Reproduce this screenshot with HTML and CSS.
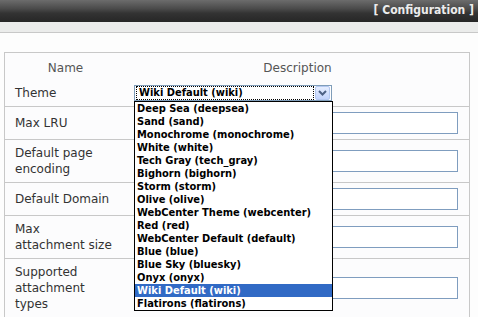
FILE: index.html
```html
<!doctype html>
<html>
  <head>
    <meta charset="UTF-8" />
    <title>Configuration</title>
    <link rel="stylesheet" href="styles.css">
  </head>
  <body>
    <div class="topbar">[ Configuration ]</div>
    <div class="subbar"></div>

    <div class="content">
      <table class="config">
        <thead>
          <tr class="head">
            <th class="col-name">Name</th>
            <th>Description</th>
          </tr>
        </thead>
        <tbody>
          <tr class="theme-row">
            <td class="label">Theme</td>
            <td class="value">
              <div class="combo">
                <div class="combo-box">
                  <span class="combo-text">Wiki Default (wiki)</span>
                  <span class="combo-btn">
                    <svg width="9" height="6" viewBox="0 0 9 6">
                      <path d="M1 1 L4.5 4.5 L8 1" fill="none" stroke="#4d6185" stroke-width="2" />
                    </svg>
                  </span>
                </div>
                <ul class="combo-list">
                  <li>Deep Sea (deepsea)</li>
                  <li>Sand (sand)</li>
                  <li>Monochrome (monochrome)</li>
                  <li>White (white)</li>
                  <li>Tech Gray (tech_gray)</li>
                  <li>Bighorn (bighorn)</li>
                  <li>Storm (storm)</li>
                  <li>Olive (olive)</li>
                  <li>WebCenter Theme (webcenter)</li>
                  <li>Red (red)</li>
                  <li>WebCenter Default (default)</li>
                  <li>Blue (blue)</li>
                  <li>Blue Sky (bluesky)</li>
                  <li>Onyx (onyx)</li>
                  <li class="selected">Wiki Default (wiki)</li>
                  <li>Flatirons (flatirons)</li>
                </ul>
              </div>
            </td>
          </tr>
          <tr>
            <td class="label">Max LRU</td>
            <td class="value"><input class="field" type="text"></td>
          </tr>
          <tr>
            <td class="label">Default page encoding</td>
            <td class="value"><input class="field" type="text"></td>
          </tr>
          <tr>
            <td class="label">Default Domain</td>
            <td class="value"><input class="field" type="text"></td>
          </tr>
          <tr>
            <td class="label">Max<br>attachment size</td>
            <td class="value"><input class="field" type="text"></td>
          </tr>
          <tr>
            <td class="label">Supported attachment types</td>
            <td class="value"><input class="field" type="text"></td>
          </tr>
        </tbody>
      </table>
    </div>
  </body>
</html>
```

FILE: styles.css
```css
html,
body {
  margin: 0;
  background-color: #fdfdfd;
  font-family: "DejaVu Sans", Verdana, sans-serif;
  font-size: 12px;
  color: #333;
  overflow: hidden;
}
.topbar {
  height: 22px;
  line-height: 21px;
  padding-right: 4px;
  text-align: right;
  font-family: "DejaVu Sans Condensed", "DejaVu Sans", sans-serif;
  font-size: 12px;
  font-weight: bold;
  color: #ececec;
  background: linear-gradient(#6c6c6c 0%, #4a4a4a 40%, #333 60%, #262626 100%);
}
.subbar {
  height: 10px;
  background-color: #ebeceb;
  border-bottom: 1px solid #c8c8c8;
}
.content {
  padding: 19px 8px 0 4px;
}
.config {
  width: 100%;
  border-collapse: collapse;
  border: 1px solid #c8c8c8;
  background-color: #fcfcfd;
}
.config th {
  font-weight: normal;
  color: #555;
  padding: 8px 0 7px;
  text-align: center;
}
.config .col-name {
  width: 121px;
}
.config td {
  border-top: 1px solid #c8c8c8;
  vertical-align: middle;
  line-height: 16px;
  padding: 5px 11px 5px 10px;
}
.config .theme-row td {
  border-top: none;
  padding-top: 3px;
  padding-bottom: 5px;
}
.config .value {
  padding-left: 8px;
}
.field {
  display: block;
  box-sizing: border-box;
  width: 100%;
  height: 22px;
  margin: 0;
  border: 1px solid #7f9dbf;
  background-color: #fff;
}
.combo {
  position: relative;
  width: 198px;
}
.combo-box {
  display: flex;
  align-items: center;
  box-sizing: border-box;
  height: 16px;
  padding: 0 1px;
  border: 1px solid #7f9db9;
  background-color: #fff;
}
.combo-text {
  flex: 1;
  height: 12px;
  line-height: 12px;
  padding-left: 2px;
  border: 1px dotted #000;
  font-family: "DejaVu Sans Condensed", "DejaVu Sans", sans-serif;
  font-size: 11px;
  font-weight: bold;
  color: #000;
  white-space: nowrap;
  overflow: hidden;
}
.combo-btn {
  display: flex;
  align-items: center;
  justify-content: center;
  box-sizing: border-box;
  width: 15px;
  height: 14px;
  margin-left: 1px;
  border: 1px solid #b4c8f0;
  border-radius: 2px;
  background: linear-gradient(#e6eeff, #c2d3fc);
}
.combo-list {
  position: absolute;
  top: 16px;
  left: 0;
  width: 199px;
  box-sizing: border-box;
  margin: 0;
  padding: 0;
  list-style: none;
  border: 1px solid #000;
  background-color: #fff;
  z-index: 10;
}
.combo-list li {
  height: 13px;
  line-height: 13px;
  padding-left: 2px;
  font-family: "DejaVu Sans Condensed", "DejaVu Sans", sans-serif;
  font-size: 11px;
  font-weight: bold;
  color: #000;
  white-space: nowrap;
}
.combo-list .selected {
  background-color: #316ac5;
  color: #fff;
}
```
